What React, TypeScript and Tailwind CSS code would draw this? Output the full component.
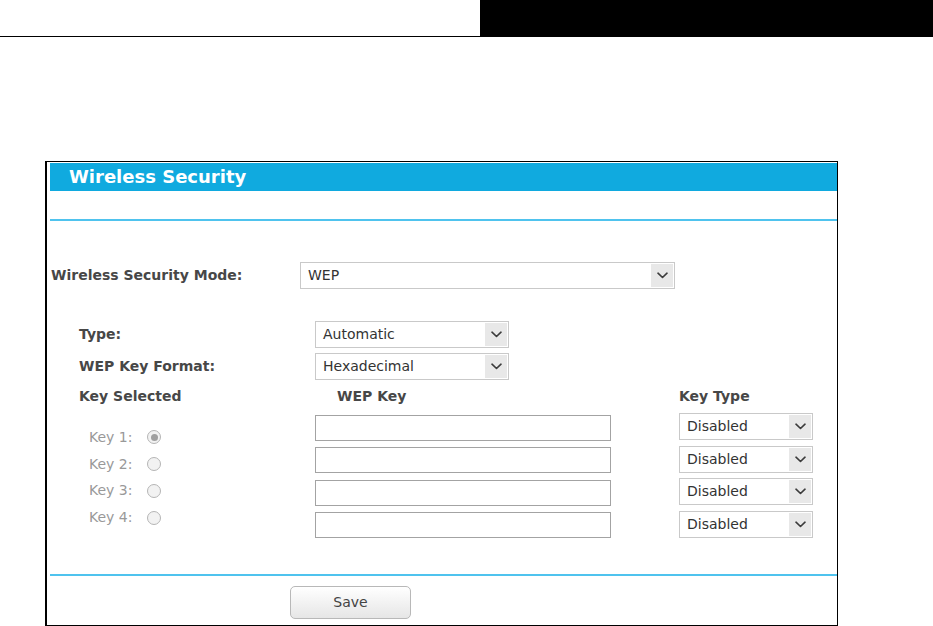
import React from "react";

const font = { fontFamily: '"DejaVu Sans", Verdana, sans-serif' };

function Chevron() {
  return (
    <svg width="11" height="7" viewBox="0 0 11 7" fill="none">
      <path d="M1 1.2 L5.5 5.5 L10 1.2" stroke="#3c3c3c" strokeWidth="1.6" strokeLinecap="round" strokeLinejoin="round" />
    </svg>
  );
}

function Select({ value, w, h = "h-[27px]" }: { value: string; w: string; h?: string }) {
  return (
    <div className={`${w} ${h} flex items-stretch border border-[#c9c9c9] bg-white p-[1px]`}>
      <div className="flex-1 flex items-center pl-[6px] text-[14px] text-[#333]">{value}</div>
      <div className="w-[22px] bg-[#e8e8e8] flex items-center justify-center">
        <Chevron />
      </div>
    </div>
  );
}

function Radio({ checked }: { checked?: boolean }) {
  return (
    <div className="w-[14px] h-[14px] rounded-full border border-[#b5b5b5] bg-[#f2f2f2] flex items-center justify-center">
      {checked && <div className="w-[7px] h-[7px] rounded-full bg-[#a0a0a0]" />}
    </div>
  );
}

export default function App() {
  const keys = ["Key 1:", "Key 2:", "Key 3:", "Key 4:"];
  return (
    <div className="w-[933px] h-[626px] bg-white overflow-hidden" style={font}>
      <div className="h-[37px] flex border-b border-black">
        <div className="w-[480px] bg-white" />
        <div className="flex-1 bg-black" />
      </div>
      <div className="mt-[124px] ml-[45px] w-[793px] h-[465px] border-l-2 border-t border-r border-b border-black pl-[3px] pt-[1px] flex flex-col">
        <div className="h-[28px] bg-[#10aadf] flex items-center pl-[19px]">
          <span className="text-white font-bold text-[18px] leading-none -mt-[1px]">Wireless Security</span>
        </div>
        <div className="mt-[28px] h-[2px] bg-[#4fc3ee]" />

        <div className="mt-[41px] h-[27px] flex items-center">
          <div className="w-[250px] pl-[1px] font-bold text-[14px] text-[#474747]">Wireless Security Mode:</div>
          <Select value="WEP" w="w-[375px]" />
        </div>

        <div className="mt-[32px] h-[27px] flex items-center">
          <div className="w-[265px] pl-[29px] font-bold text-[14px] text-[#474747]">Type:</div>
          <Select value="Automatic" w="w-[194px]" />
        </div>
        <div className="mt-[5px] h-[27px] flex items-center">
          <div className="w-[265px] pl-[29px] font-bold text-[14px] text-[#474747]">WEP Key Format:</div>
          <Select value="Hexadecimal" w="w-[194px]" />
        </div>

        <div className="mt-[6px] h-[20px] flex items-center font-bold text-[14px] text-[#474747]">
          <div className="w-[287px] pl-[29px]">Key Selected</div>
          <div className="w-[342px]">WEP Key</div>
          <div>Key Type</div>
        </div>

        <div className="flex">
          <div className="w-[265px] pl-[39px] pt-[18px] flex flex-col">
            {keys.map((k, i) => (
              <div key={k} className="h-[26.8px] flex items-center gap-[15px] text-[14px] text-[#999]">
                <span>{k}</span>
                <Radio checked={i === 0} />
              </div>
            ))}
          </div>
          <div className="w-[364px] pt-[9px] flex flex-col gap-[6.33px]">
            {keys.map((k) => (
              <div key={k} className="w-[296px] h-[26px] border border-[#a3a3a3] bg-white" />
            ))}
          </div>
          <div className="pt-[7px] flex flex-col gap-[5.67px]">
            {keys.map((k) => (
              <Select key={k} value="Disabled" w="w-[134px]" />
            ))}
          </div>
        </div>

        <div className="mt-[36px] h-[2px] bg-[#4fc3ee]" />
        <div className="mt-[10px] pl-[240px]">
          <button className="w-[121px] h-[33px] rounded-[5px] border border-[#b8b8b8] bg-gradient-to-b from-[#ffffff] to-[#e6e6e6] text-[14px] text-[#444]">
            Save
          </button>
        </div>
      </div>
    </div>
  );
}
